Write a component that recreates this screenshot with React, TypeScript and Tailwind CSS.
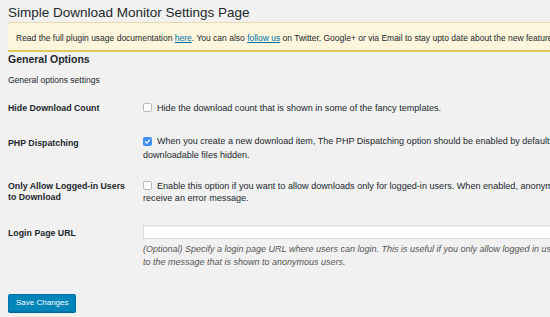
import React from 'react';

const CheckBox: React.FC<{ checked?: boolean }> = ({ checked }) =>
  checked ? (
    <span className="inline-flex items-center justify-center w-[9px] h-[9px] rounded-[2px] bg-[#3b8ff6] mr-[5px] align-[-1px]">
      <svg width="7" height="7" viewBox="0 0 10 10" fill="none">
        <path d="M2 5.2 L4.2 7.4 L8.2 2.6" stroke="#fff" strokeWidth="1.8" strokeLinecap="round" strokeLinejoin="round" />
      </svg>
    </span>
  ) : (
    <span className="inline-block w-[9px] h-[9px] rounded-[2px] bg-white border border-[#b9b9b9] mr-[5px] align-[-1px]" />
  );

const App: React.FC = () => {
  return (
    <div
      className="w-[550px] h-[317px] overflow-hidden bg-[#f1f1f1] text-[#23282d] whitespace-nowrap"
      style={{ fontFamily: '"Liberation Sans", Arial, sans-serif' }}
    >
      <div className="pl-[8px]">
        <h1 className="pt-[4px] text-[13.5px] leading-[17px] text-[#23282d]">Simple Download Monitor Settings Page</h1>

        {/* notice */}
        <div className="mt-[1px] h-[30px] -mr-[20px] bg-[#fdf6dc] border-t border-t-[#e6dcb0] border-b-2 border-b-[#dcc957] pl-[8px] pt-[10px] text-[8.5px] leading-[11px]">
          Read the full plugin usage documentation{' '}
          <a className="text-[#0073aa] underline">here</a>. You can also{' '}
          <a className="text-[#0073aa] underline">follow us</a> on Twitter, Google+ or via Email to stay upto date about the new features.
        </div>

        <h2 className="text-[10.5px] leading-[14px] font-bold">General Options</h2>
        <p className="mt-[8px] text-[8.5px] leading-[12px]">General options settings</p>

        {/* rows */}
        <div className="mt-[16px] flex">
          <div className="w-[135px] shrink-0 text-[8.8px] font-bold leading-[13px]">Hide Download Count</div>
          <div className="text-[9.1px] leading-[13px]">
            <CheckBox />
            Hide the download count that is shown in some of the fancy templates.
          </div>
        </div>

        <div className="mt-[20px] flex">
          <div className="w-[135px] shrink-0 pt-[2px] text-[8.8px] font-bold leading-[13px]">PHP Dispatching</div>
          <div className="text-[9.05px] leading-[13.5px]">
            <CheckBox checked />
            When you create a new download item, The PHP Dispatching option should be enabled by default. PHP Dispatching keeps the
            <br />
            downloadable files hidden.
          </div>
        </div>

        <div className="mt-[19px] flex">
          <div className="w-[135px] shrink-0 text-[8.8px] font-bold leading-[11px]">
            Only Allow Logged-in Users
            <br />
            to Download
          </div>
          <div className="text-[9.1px] leading-[11.5px]">
            <CheckBox />
            Enable this option if you want to allow downloads only for logged-in users. When enabled, anonymous users clicking on the download button will
            <br />
            receive an error message.
          </div>
        </div>

        <div className="mt-[21px] flex">
          <div className="w-[135px] shrink-0 pt-[1px] text-[8.8px] font-bold leading-[14px]">Login Page URL</div>
          <div className="flex-1">
            <div className="h-[14px] w-[500px] bg-white border border-[#dcdcdc] shadow-[inset_0_1px_1px_rgba(0,0,0,0.06)]" />
            <p className="mt-[4px] text-[9px] leading-[12.5px] italic text-[#555]">
              (Optional) Specify a login page URL where users can login. This is useful if you only allow logged in users to download. This link will be added
              <br />
              to the message that is shown to anonymous users.
            </p>
          </div>
        </div>

        <button className="mt-[26px] h-[18px] px-[7px] bg-[#0085ba] border border-[#0073aa] rounded-[2px] text-white text-[8px] leading-[16px] shadow-[0_1px_0_#006799]">
          Save Changes
        </button>
      </div>
    </div>
  );
};

export default App;
